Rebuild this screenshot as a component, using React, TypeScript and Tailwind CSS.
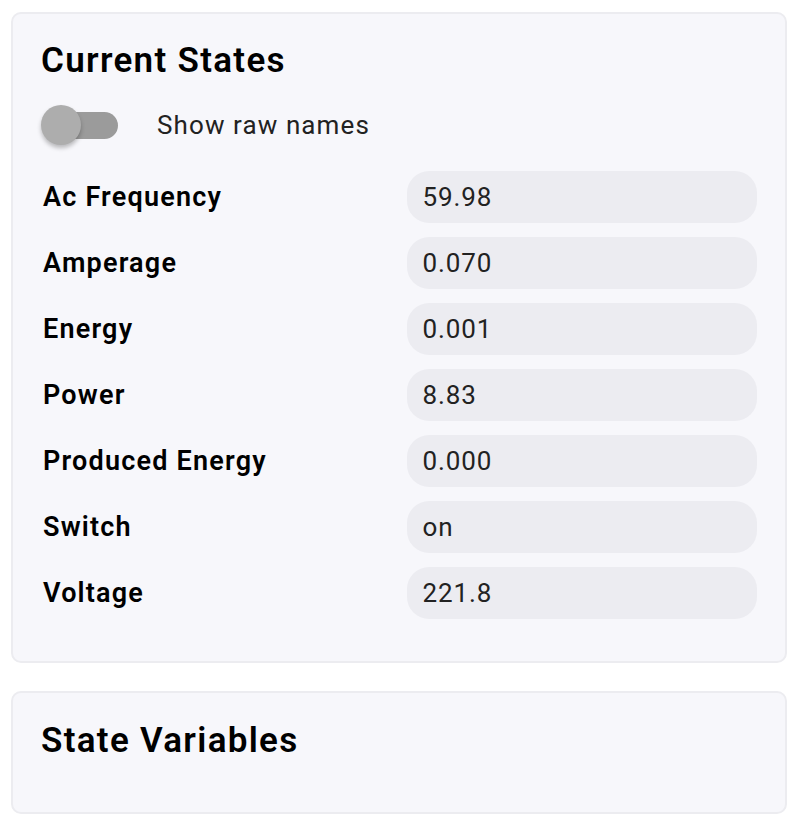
import {useState} from 'react';

const states = [
  {name: 'Ac Frequency', value: '59.98'},
  {name: 'Amperage', value: '0.070'},
  {name: 'Energy', value: '0.001'},
  {name: 'Power', value: '8.83'},
  {name: 'Produced Energy', value: '0.000'},
  {name: 'Switch', value: 'on'},
  {name: 'Voltage', value: '221.8'},
];

function Toggle({on, onChange}: {on: boolean; onChange: (v: boolean) => void}) {
  return (
    <button
      type="button"
      onClick={() => onChange(!on)}
      className="relative h-[40px] w-[78px] shrink-0"
    >
      <span className="absolute left-[19px] right-[1px] top-[7px] h-[27px] rounded-full bg-[#9b9b9b]" />
      <span
        className={`absolute top-0 h-[40px] w-[40px] rounded-full bg-[#adadad] shadow-[0_3px_4px_rgba(0,0,0,0.25)] ${
          on ? 'left-[38px]' : 'left-0'
        }`}
      />
    </button>
  );
}

export default function App() {
  const [raw, setRaw] = useState(false);

  return (
    <div
      className="min-h-screen bg-white pl-[11px] pr-[15px] pt-[12px] pb-[12px] text-[#111]"
      style={{fontFamily: 'Roboto, "Liberation Sans", sans-serif'}}
    >
      {/* Current States */}
      <div className="rounded-[10px] border-2 border-[#ececf0] bg-[#f7f7fb] pl-[28px] pr-[28px] pt-[25px] pb-[42px]">
        <h2 className="text-[35px] font-semibold leading-[44px] tracking-[1.3px] text-black">Current States</h2>
        <div className="mt-[22px] flex items-center gap-[38px]">
          <Toggle on={raw} onChange={setRaw} />
          <span className="text-[26px] leading-[30px] tracking-[1.1px] text-[#222]">Show raw names</span>
        </div>
        <div className="mt-[26px] flex flex-col gap-[14px]">
          {states.map((s) => (
            <div key={s.name} className="flex items-center">
              <div className="w-[367px] pl-[2px] text-[27px] font-semibold leading-[30px] tracking-[1.2px] text-black">
                {raw ? s.name.toLowerCase().replace(/ /g, '_') : s.name}
              </div>
              <div className="flex h-[52px] w-[350px] items-center rounded-[22px] bg-[#ececf1] px-[15px] text-[26px] tracking-[0.9px] text-[#222]">
                {s.value}
              </div>
            </div>
          ))}
        </div>
      </div>

      {/* State Variables */}
      <div className="mt-[28px] h-[123px] rounded-[10px] border-2 border-[#ececf0] bg-[#f7f7fb] pl-[28px] pt-[26px]">
        <h2 className="text-[35px] font-semibold leading-[44px] tracking-[1.3px] text-black">State Variables</h2>
      </div>
    </div>
  );
}
